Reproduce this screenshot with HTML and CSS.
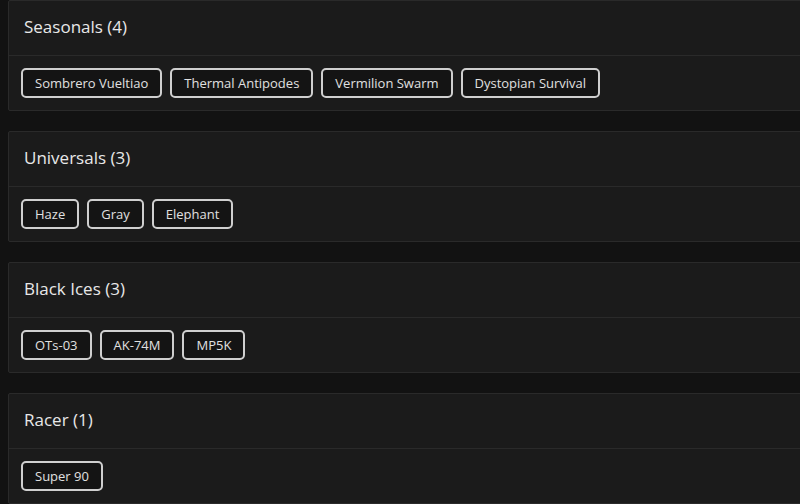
FILE: index.html
```html
<!DOCTYPE html>
<html>
<head>
<meta charset="utf-8">
<link rel="stylesheet" href="styles.css">
</head>
<body>
<div class="list">
  <section class="card">
    <h2 class="card-title">Seasonals (4)</h2>
    <div class="chips">
      <span class="chip">Sombrero Vueltiao</span>
      <span class="chip">Thermal Antipodes</span>
      <span class="chip">Vermilion Swarm</span>
      <span class="chip">Dystopian Survival</span>
    </div>
  </section>
  <section class="card">
    <h2 class="card-title">Universals (3)</h2>
    <div class="chips">
      <span class="chip">Haze</span>
      <span class="chip">Gray</span>
      <span class="chip">Elephant</span>
    </div>
  </section>
  <section class="card">
    <h2 class="card-title">Black Ices (3)</h2>
    <div class="chips">
      <span class="chip">OTs-03</span>
      <span class="chip">AK-74M</span>
      <span class="chip">MP5K</span>
    </div>
  </section>
  <section class="card">
    <h2 class="card-title">Racer (1)</h2>
    <div class="chips">
      <span class="chip">Super 90</span>
    </div>
  </section>
</div>
</body>
</html>
```
FILE: styles.css
```css
html, body {
  margin: 0;
  padding: 0;
  background: #121212;
}
body {
  font-family: "Open Sans", "DejaVu Sans", sans-serif;
  color: #e6e6e6;
  overflow: hidden;
  height: 504px;
}
.list {
  display: flex;
  flex-direction: column;
  gap: 20px;
  padding-left: 8px;
  width: 820px;
}
.card {
  background: #1b1b1b;
  border: 1px solid #2a2a2a;
  border-radius: 2px;
}
.card-title {
  margin: 0;
  height: 55px;
  box-sizing: border-box;
  padding: 0 15px 3px;
  display: flex;
  align-items: center;
  font-size: 17px;
  font-weight: 500;
  color: #e8e8e8;
  border-bottom: 1px solid #2a2a2a;
}
.chips {
  height: 54px;
  box-sizing: border-box;
  padding: 0 12px;
  display: flex;
  align-items: center;
  gap: 8px;
}
.chip {
  box-sizing: border-box;
  height: 30px;
  display: inline-flex;
  align-items: center;
  padding: 0 12px;
  border: 2px solid #cfcfcf;
  border-radius: 5px;
  font-size: 13px;
  color: #e0e0e0;
  background: #141414;
}
```
